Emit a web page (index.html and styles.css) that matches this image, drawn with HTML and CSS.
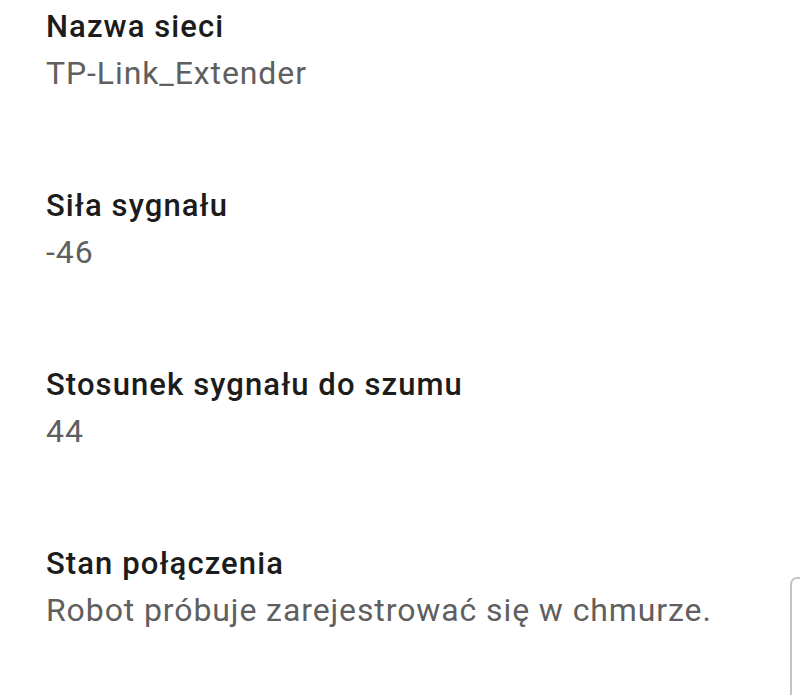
FILE: index.html
```html
<!DOCTYPE html>
<html lang="pl">
<head>
    <meta charset="UTF-8">
    <meta name="viewport" content="width=device-width, initial-scale=1.0">
    <title>Informacje o sieci</title>
    <link rel="stylesheet" href="styles.css">
</head>
<body>
    <div class="details">
        <div class="item">
            <div class="label">Nazwa sieci</div>
            <div class="value">TP-Link_Extender</div>
        </div>
        <div class="item">
            <div class="label">Siła sygnału</div>
            <div class="value">-46</div>
        </div>
        <div class="item">
            <div class="label">Stosunek sygnału do szumu</div>
            <div class="value">44</div>
        </div>
        <div class="item">
            <div class="label">Stan połączenia</div>
            <div class="value">Robot próbuje zarejestrować się w chmurze.</div>
        </div>
    </div>
    <div class="side-card"></div>
</body>
</html>
```
FILE: styles.css
```css
body {
    font-family: Roboto, "Noto Sans", sans-serif;
    background: #fff;
    margin: 0;
    padding: 0;
    height: 695px;
    overflow: hidden;
    position: relative;
}
.details {
    padding: 4px 0 0 46px;
    display: flex;
    flex-direction: column;
    gap: 87px;
}
.label {
    font-size: 31px;
    font-weight: 500;
    letter-spacing: 1.1px;
    line-height: 46px;
    color: #1c1c1c;
}
.value {
    font-size: 32px;
    letter-spacing: 0.9px;
    line-height: 46px;
    color: #5f5f5f;
}
.side-card {
    position: absolute;
    left: 790px;
    top: 577px;
    width: 40px;
    height: 116px;
    border: 2px solid #c4c4c4;
    border-bottom: none;
    border-radius: 7px 7px 0 0;
}
```
